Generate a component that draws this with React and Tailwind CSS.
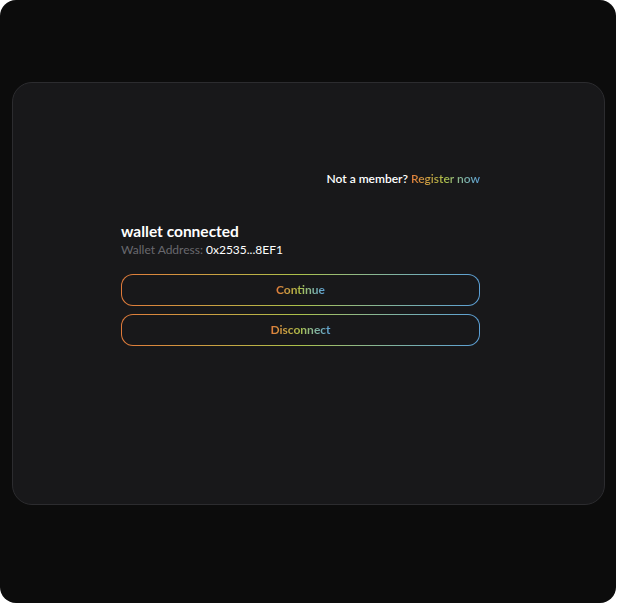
import React from 'react';

const gradient = 'bg-gradient-to-r from-[#e07a3a] via-[#a9c04a] to-[#5b9fd6]';

const GradientButton = ({ label }) => (
  <button type="button" className={`w-full h-8 p-px rounded-xl ${gradient}`}>
    <span className="flex h-full w-full items-center justify-center rounded-[11px] bg-[#18181a]">
      <span className={`text-[12px] font-bold bg-clip-text text-transparent ${gradient}`}>{label}</span>
    </span>
  </button>
);

const App = () => {
  return (
    <div className="min-h-screen bg-white font-['Lato',sans-serif]">
      <div className="w-[616px] h-[603px] rounded-2xl bg-[#0c0c0c] pt-[82px] pl-3">
        <div className="w-[593px] h-[423px] rounded-[20px] border border-[#2c2c2f] bg-[#18181a] pt-[86px] pl-[108px]">
          <div className="w-[359px] flex flex-col">
            <div className="text-right text-[12px] font-semibold text-white leading-5">
              Not a member?{' '}
              <span className={`bg-clip-text text-transparent ${gradient}`}>Register now</span>
            </div>

            <h2 className="mt-8 text-[15.5px] font-bold text-white leading-5">wallet connected</h2>
            <p className="mt-px text-[12px] leading-4 text-[#68686e]">
              Wallet Address: <span className="text-white">0x2535...8EF1</span>
            </p>

            <div className="mt-4 flex flex-col gap-2">
              <GradientButton label="Continue" />
              <GradientButton label="Disconnect" />
            </div>
          </div>
        </div>
      </div>
    </div>
  );
};

export default App;
